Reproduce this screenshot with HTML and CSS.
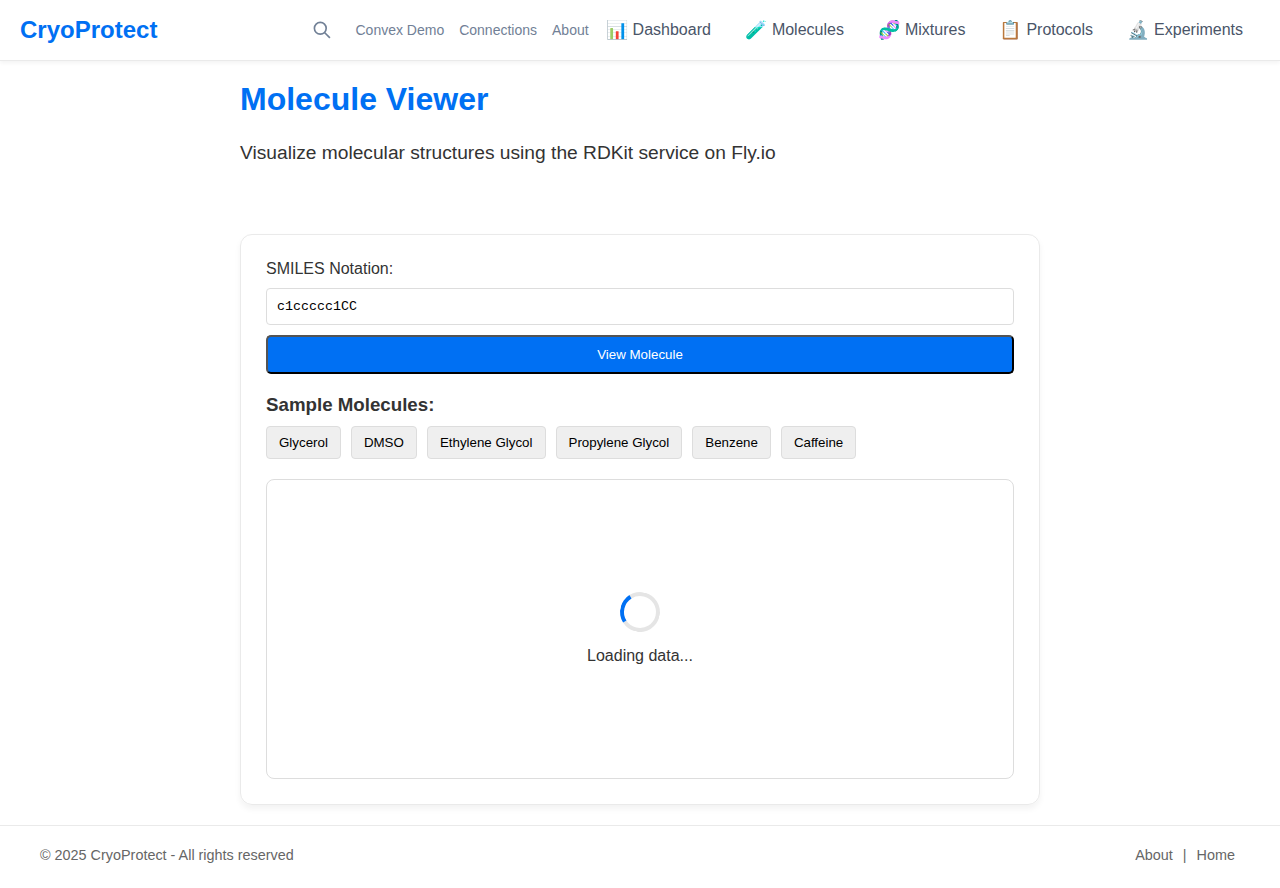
FILE: index.html
```html
<!DOCTYPE html>
<html lang="en">
<head>
<meta charset="utf-8">
<title>CryoProtect - Molecule Viewer</title>
<link rel="stylesheet" href="styles.css">
</head>
<body>
<header class="header">
  <a class="logo">CryoProtect</a>
  <div class="header-right">
    <button class="search" aria-label="Search"><svg width="20" height="20" viewBox="0 0 20 20" fill="none" stroke="currentColor" stroke-width="1.67"><circle cx="8.3" cy="8.3" r="5.9"/><line x1="12.5" y1="12.5" x2="17.9" y2="17.9"/></svg></button>
    <div class="links"><a>Convex Demo</a><a>Connections</a><a>About</a></div>
    <nav class="nav">
      <a class="nav-item"><span class="icon">📊</span><span>Dashboard</span></a>
      <a class="nav-item"><span class="icon">🧪</span><span>Molecules</span></a>
      <a class="nav-item"><span class="icon">🧬</span><span>Mixtures</span></a>
      <a class="nav-item"><span class="icon">📋</span><span>Protocols</span></a>
      <a class="nav-item"><span class="icon">🔬</span><span>Experiments</span></a>
    </nav>
  </div>
</header>
<main class="main">
  <h1 class="title">Molecule Viewer</h1>
  <p class="subtitle">Visualize molecular structures using the RDKit service on Fly.io</p>
  <section class="card">
    <label class="label" for="smiles">SMILES Notation:</label>
    <input class="input" id="smiles" type="text" value="c1ccccc1CC">
    <button class="view">View Molecule</button>
    <h3 class="samples-title">Sample Molecules:</h3>
    <div class="samples">
      <button class="sample">Glycerol</button>
      <button class="sample">DMSO</button>
      <button class="sample">Ethylene Glycol</button>
      <button class="sample">Propylene Glycol</button>
      <button class="sample">Benzene</button>
      <button class="sample">Caffeine</button>
    </div>
    <div class="viewer">
      <div class="spinner"></div>
      <p class="loading">Loading data...</p>
    </div>
  </section>
</main>
<footer class="footer">
  <span>© 2025 CryoProtect - All rights reserved</span>
  <div class="footer-links"><a>About</a><span>|</span><a>Home</a></div>
</footer>
</body>
</html>
```
FILE: styles.css
```css
* { box-sizing: border-box; margin: 0; padding: 0; }
body { font-family: "Liberation Sans", Arial, sans-serif; color: #333; background: #fff; line-height: 1.6; }
.header { display: flex; align-items: center; justify-content: space-between; height: 61px; padding: 0 20px; border-bottom: 1px solid #eaeaea; box-shadow: 0 2px 4px rgba(0,0,0,.05); }
.logo { font-size: 24px; font-weight: bold; color: #0070f3; }
.header-right { display: flex; align-items: center; }
.search { display: flex; border: 0; background: none; color: #718096; margin-right: 23px; }
.links { display: flex; gap: 15px; font-size: 14px; color: #718096; }
.nav { display: flex; }
.nav-item { display: flex; align-items: center; gap: 5px; padding: 0 17px; color: #4a5568; }
.icon { font-size: 18px; line-height: 28px; }
.main { width: 800px; margin: 0 auto; }
.title { font-size: 32px; line-height: 51px; color: #0070f3; margin-top: 13px; }
.subtitle { font-size: 19.2px; line-height: 31px; margin-top: 12px; }
.card { display: flex; flex-direction: column; margin-top: 66px; height: 571px; padding: 21px 25px 25px; border: 1px solid #eaeaea; border-radius: 12px; box-shadow: 0 4px 6px rgba(0,0,0,.05); }
.label { line-height: 26px; }
.input { height: 37px; margin-top: 6px; padding: 10px; border: 1px solid #ddd; border-radius: 4px; font: 13.333px "Liberation Mono", monospace; color: #000; }
.view { height: 39px; margin-top: 10px; border: 2px outset #000; border-radius: 5px; background: #0070f3; color: #fff; font: 13.333px "Liberation Sans", Arial, sans-serif; }
.samples-title { font-size: 18.72px; line-height: 30px; margin-top: 16px; }
.samples { display: flex; gap: 10px; margin-top: 6px; }
.sample { height: 33px; padding: 0 12px; border: 1px solid #ddd; border-radius: 4px; background: #efefef; color: #000; font: 13.333px "Liberation Sans", Arial, sans-serif; }
.viewer { display: flex; flex-direction: column; align-items: center; height: 300px; padding-top: 112px; margin-top: 20px; border: 1px solid #ddd; border-radius: 8px; }
.spinner { width: 40px; height: 40px; border: 4px solid rgba(0,0,0,.1); border-left-color: #0070f3; border-radius: 50%; transform: rotate(13deg); }
.loading { line-height: 26px; margin-top: 11px; }
.footer { display: flex; justify-content: space-between; margin-top: 20px; padding: 18px 45px 0 40px; border-top: 1px solid #eaeaea; color: #666; font-size: 14.4px; line-height: 23px; }
.footer-links { display: flex; gap: 10px; }
```
